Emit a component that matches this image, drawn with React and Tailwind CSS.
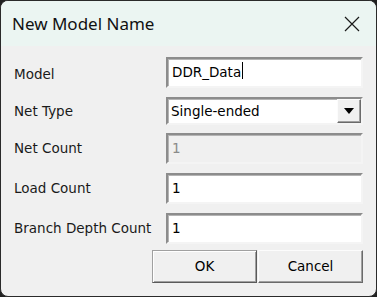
export default function App() {
  const sunken =
    "border-2 border-t-[#8c8c8c] border-l-[#8c8c8c] border-b-[#f4f4f4] border-r-[#f4f4f4] shadow-[inset_1px_1px_0_#b4b4b4]";
  const label = "w-[152px] shrink-0 text-[13.5px] text-[#1a1a1a]";
  const font = { fontFamily: "'DejaVu Sans', 'Liberation Sans', sans-serif" };
  return (
    <div className="w-[377px] h-[297px] bg-[#202020]" style={font}>
      <div className="h-full rounded-[8px] border border-[#2a2a2a] overflow-hidden flex flex-col bg-[#f0f0f0]">
        <div className="h-[45px] shrink-0 bg-[#ebf5f2] flex items-center justify-between pl-[11px] pr-[16px]">
          <span
            className="text-[17px] text-[#111] pt-[1px]"
            style={{ fontFamily: "'Noto Sans', 'Open Sans', sans-serif" }}
          >
            New Model Name
          </span>
          <svg width="16" height="16" viewBox="0 0 16 16" className="mt-[1px]">
            <path d="M1 1 L15 15 M15 1 L1 15" stroke="#1a1a1a" strokeWidth="1.2" fill="none" />
          </svg>
        </div>
        <div className="flex flex-col pl-[13px] pr-[13px] pt-[11px]">
          <div className="flex items-center h-[31px]">
            <span className={`${label} pt-[4px]`}>Model</span>
            <div className={`w-[197px] h-[31px] bg-white ${sunken} flex items-start pl-[4px] pt-[3px] text-[13.5px] text-black`}>
              <span>DDR_Data</span>
              <span className="w-[1px] h-[17px] bg-black ml-[1px]" />
            </div>
          </div>
          <div className="flex items-center h-[28px] mt-[9px]">
            <span className={label}>Net Type</span>
            <div className={`w-[197px] h-[28px] bg-white ${sunken} flex items-center pl-[3px] text-[13.5px] text-black`}>
              <span className="flex-1">Single-ended</span>
              <div className="w-[24px] h-[24px] bg-[#f0f0f0] border border-t-[#fcfcfc] border-l-[#fcfcfc] border-b-[#6a6a6a] border-r-[#6a6a6a] shadow-[inset_-1px_-1px_0_#a0a0a0] flex items-center justify-center">
                <svg width="10" height="6" viewBox="0 0 10 6">
                  <path d="M0 0 H10 L5 6 Z" fill="#000" />
                </svg>
              </div>
            </div>
          </div>
          <div className="flex items-center h-[31px] mt-[8px]">
            <span className={label}>Net Count</span>
            <div className={`w-[197px] h-[31px] bg-[#f0f0f0] ${sunken} flex items-start pl-[4px] pt-[3px] text-[13.5px] text-[#8a8a8a]`}>
              1
            </div>
          </div>
          <div className="flex items-center h-[31px] mt-[9px]">
            <span className={label}>Load Count</span>
            <div className={`w-[197px] h-[31px] bg-white ${sunken} flex items-start pl-[4px] pt-[3px] text-[13.5px] text-black`}>
              1
            </div>
          </div>
          <div className="flex items-center h-[31px] mt-[9px]">
            <span className={label}>Branch Depth Count</span>
            <div className={`w-[197px] h-[31px] bg-white ${sunken} flex items-start pl-[4px] pt-[3px] text-[13.5px] text-black`}>
              1
            </div>
          </div>
          <div className="flex justify-end mt-[6px]">
            <button className="w-[105px] h-[33px] bg-[#f0f0f0] border border-t-[#a0a0a0] border-l-[#a0a0a0] border-b-[#5a5a5a] border-r-[#5a5a5a] shadow-[inset_1px_1px_0_#fff,inset_-1px_-1px_0_#a0a0a0] text-[13.5px] text-black">
              OK
            </button>
            <button className="w-[105px] h-[33px] ml-[1px] bg-[#f0f0f0] border border-t-[#fcfcfc] border-l-[#fcfcfc] border-b-[#6a6a6a] border-r-[#6a6a6a] shadow-[inset_-1px_-1px_0_#a0a0a0] text-[13.5px] text-black">
              Cancel
            </button>
          </div>
        </div>
      </div>
    </div>
  );
}
